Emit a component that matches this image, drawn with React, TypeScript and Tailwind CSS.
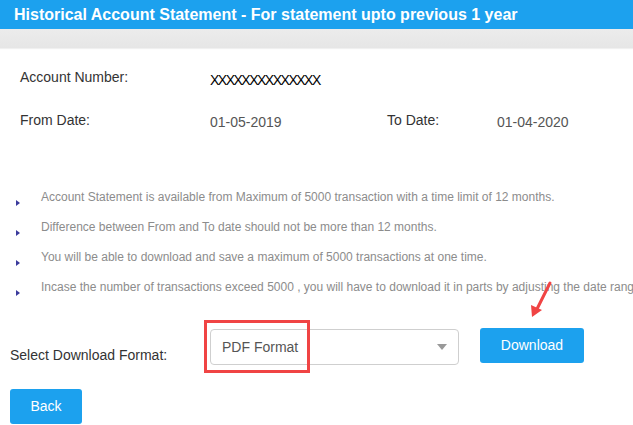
import React from 'react';

const notes = [
  'Account Statement is available from Maximum of 5000 transaction with a time limit of 12 months.',
  'Difference between From and To date should not be more than 12 months.',
  'You will be able to download and save a maximum of 5000 transactions at one time.',
  'Incase the number of transactions exceed 5000 , you will have to download it in parts by adjusting the date range.',
];

const font = { fontFamily: '"Liberation Sans", Arial, sans-serif' };

export default function App() {
  return (
    <div className="relative w-[633px] h-[425px] overflow-hidden bg-white" style={font}>
      {/* header */}
      <div className="h-[29px] bg-[#1ca1ee] pl-[14px] flex items-center">
        <h1 className="text-white font-bold text-[16px] leading-none">
          Historical Account Statement - For statement upto previous 1 year
        </h1>
      </div>
      <div className="h-[19px] bg-gradient-to-b from-[#ececec] to-[#e6e6e6] shadow-[0_1px_1px_rgba(0,0,0,0.06)]" />

      {/* account details */}
      <div className="pt-5 pl-5">
        <div className="grid grid-cols-[190px_177px_110px_1fr] text-[14px] leading-[18px] text-[#333]">
          <span>Account Number:</span>
          <span className="text-black mt-[3px] tracking-[-1.5px]">XXXXXXXXXXXXXX</span>
          <span />
          <span />
        </div>
        <div className="grid grid-cols-[190px_177px_110px_1fr] text-[14px] leading-[18px] text-[#333] mt-[22px]">
          <span>From Date:</span>
          <span className="text-[#555] mt-[2px]">01-05-2019</span>
          <span>To Date:</span>
          <span className="text-[#555] mt-[2px]">01-04-2020</span>
        </div>
      </div>

      {/* notes */}
      <ul className="mt-[57px]">
        {notes.map((n) => (
          <li key={n} className="flex h-[30px] whitespace-nowrap">
            <span className="w-[26px] shrink-0 pl-[16px] pt-[12px]">
              <span className="block w-0 h-0 border-y-[3px] border-y-transparent border-l-[4px] border-l-[#3b3b9c]" />
            </span>
            <span className="text-[12px] leading-[18px] text-[#8c8c8c] pl-[15px]">{n}</span>
          </li>
        ))}
      </ul>

      {/* format row */}
      <div className="flex items-start mt-[20px]">
        <span className="w-[200px] ml-[10px] mt-[18px] text-[14px] leading-[18px] text-[#333]">
          Select Download Format:
        </span>
        <div className="relative mt-[1px] w-[249px] h-[36px] rounded-[4px] border border-[#cfcfcf] flex items-center justify-between pl-[11px] pr-[11px]">
          <span className="text-[14px] text-[#555]">PDF Format</span>
          <span className="w-0 h-0 border-x-[5px] border-x-transparent border-t-[6px] border-t-[#999]" />
          <span className="absolute -left-[7px] -top-[10px] w-[106px] h-[53px] border-[3px] border-[#f04444]" />
        </div>
        <button className="ml-[21px] w-[104px] h-[35px] rounded-[3px] bg-[#1ca1ee] text-white text-[14px]">
          Download
        </button>
      </div>

      <button className="ml-[10px] mt-[24px] w-[72px] h-[35px] rounded-[3px] bg-[#1ca1ee] text-white text-[14px]">
        Back
      </button>

      {/* annotation arrow */}
      <svg className="absolute left-[525px] top-[280px]" width="32" height="42" viewBox="0 0 32 42">
        <line x1="25" y1="3" x2="12" y2="29" stroke="#f04444" strokeWidth="3" strokeLinecap="round" />
        <polygon points="7,37 6,25 17,30" fill="#f04444" />
      </svg>
    </div>
  );
}
